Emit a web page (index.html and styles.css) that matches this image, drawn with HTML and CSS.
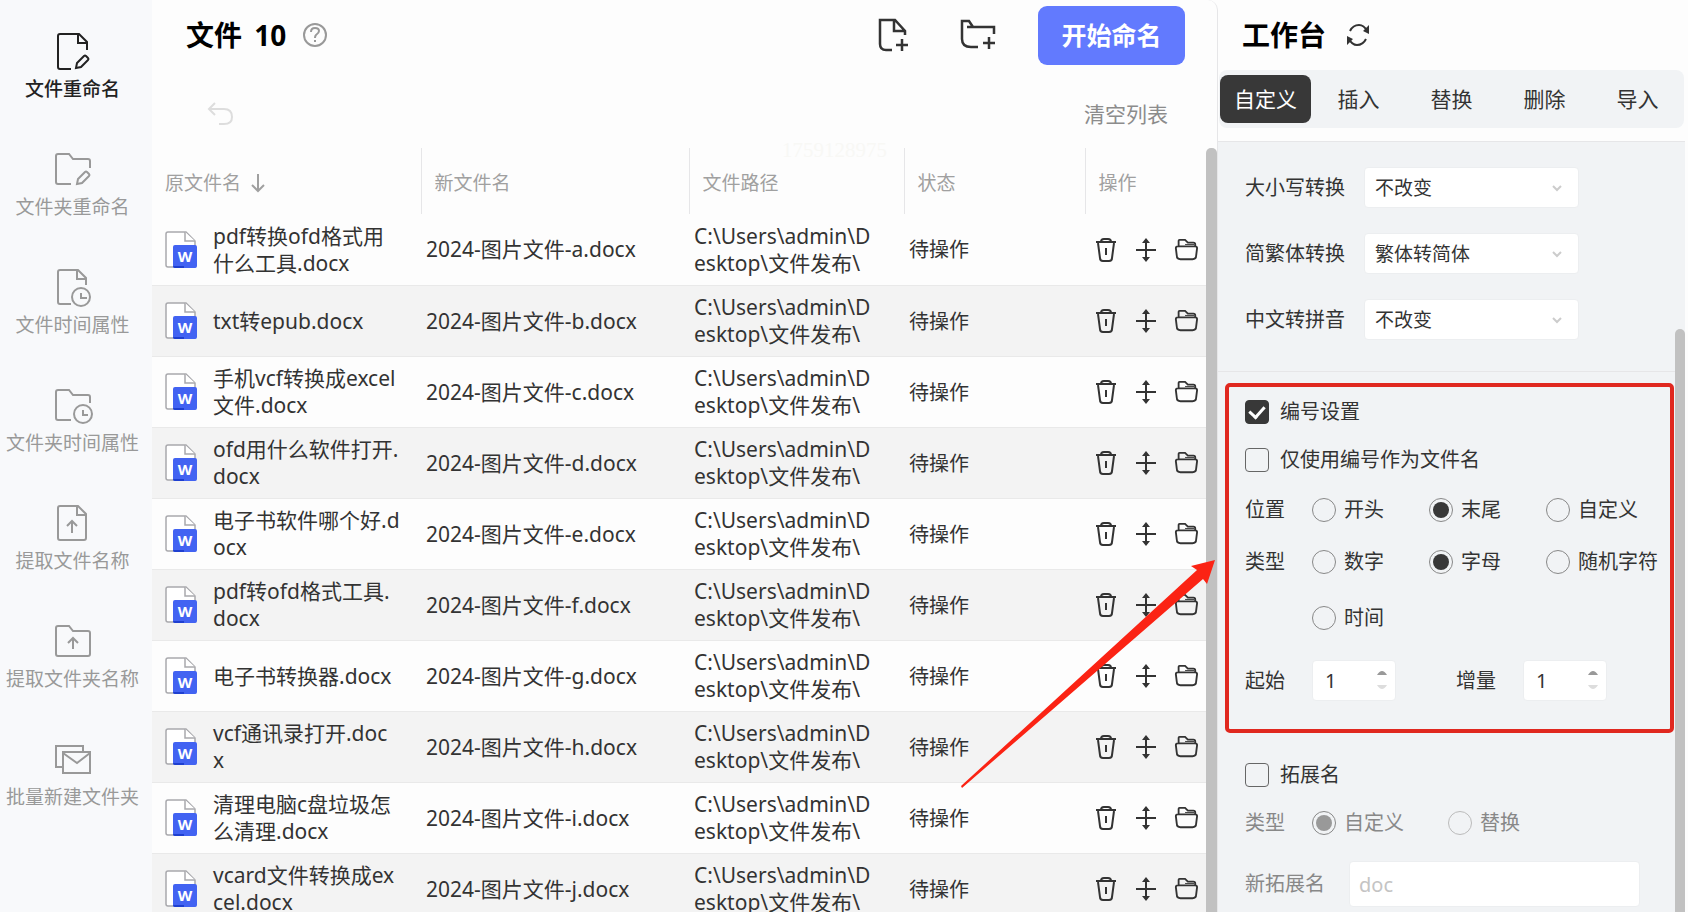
FILE: index.html
```
<!DOCTYPE html>
<html lang="zh-CN">

<head>
  <meta charset="UTF-8">
  <meta name="viewport" content="width=device-width, initial-scale=1.0">
  <title>文件重命名</title>
  <link rel="stylesheet" href="styles.css">
</head>

<body>

  <!-- Icons -->
  <svg class="sprite" xmlns="http://www.w3.org/2000/svg">
    <symbol id="i-file-edit" viewBox="0 0 40 40">
      <path d="M18 38H7q-2 0-2-2V5q0-2 2-2h19l8 8v8M25 3v9h9M23 37l1-5 7-7q1-1 2 0l2 2q1 1 0 2l-7 7z" />
    </symbol>
    <symbol id="i-folder-edit" viewBox="0 0 40 40">
      <path d="M18 35H5q-2 0-2-2V7q0-2 2-2h11l4 5h15q2 0 2 2v7M24 35l1-5 7-7q1-1 2 0l2 2q1 1 0 2l-7 7z" />
    </symbol>
    <symbol id="i-file-time" viewBox="0 0 40 40">
      <path d="M18 37H7q-2 0-2-2V5q0-2 2-2h18l8 8v7M24 3v9h9M28 26v5h6" />
      <circle cx="28" cy="30" r="9" />
    </symbol>
    <symbol id="i-folder-time" viewBox="0 0 40 40">
      <path d="M18 35H5q-2 0-2-2V7q0-2 2-2h11l4 5h15q2 0 2 2v6M30 25v5h5" />
      <circle cx="30" cy="29" r="9" />
    </symbol>
    <symbol id="i-file-up" viewBox="0 0 40 40">
      <path d="M7 3h18l8 8v24q0 2-2 2H7q-2 0-2-2V5q0-2 2-2zM24 3v9h9M19 30V19M14 23l5-5 5 5" />
    </symbol>
    <symbol id="i-folder-up" viewBox="0 0 40 40">
      <path d="M5 5h11l4 5h15q2 0 2 2v21q0 2-2 2H5q-2 0-2-2V7q0-2 2-2zM20 28V17M15 22l5-5 5 5" />
    </symbol>
    <symbol id="i-batch" viewBox="0 0 40 40">
      <path d="M9 28H3V7h27v6M10 13h27v21H10zM10 14l14 10 13-10" />
    </symbol>
    <symbol id="i-file-add" viewBox="0 0 36 36">
      <path d="M17 33h-6q-6 0-6-6V3h15l10 11v4M19 4v10h10M27 22v12M21 28h12" />
    </symbol>
    <symbol id="i-folder-add" viewBox="0 0 36 36">
      <path d="M18 30h-7q-9 0-9-8V4h7l4 6h21v7M7 10h6M29 20v12M23 26h12" />
    </symbol>
    <symbol id="i-help" viewBox="0 0 26 26">
      <circle cx="13" cy="13" r="11" />
      <path d="M9 10q0-4 4-4t4 3q0 2-3 4-1 1-1 3M13 18v2" />
    </symbol>
    <symbol id="i-undo" viewBox="0 0 28 28">
      <path d="M8 3L2 9l6 6M2 9h15q8 0 8 8 0 7-8 7h-5" />
    </symbol>
    <symbol id="i-down" viewBox="0 0 16 20">
      <path d="M8 1v17M2 12l6 6 6-6" />
    </symbol>
    <symbol id="i-refresh" viewBox="0 0 24 24">
      <path d="M4 8Q7 2 13 2q5 0 8 6M20 16q-3 6-9 6-5 0-8-6" />
      <path class="solid" d="M23 2v9l-6-3zM1 22v-9l6 3z" />
    </symbol>
    <symbol id="i-trash" viewBox="0 0 24 26">
      <path d="M2 5h20M7 5q0-3 3-3h4q3 0 3 3M4 6l2 15q0 3 3 3h6q3 0 3-3l2-15M12 11v7" />
    </symbol>
    <symbol id="i-move" viewBox="0 0 24 26">
      <path d="M2 13h20M12 3v20" />
      <path class="solid" d="M12 1l4 5H8zM12 25l4-5H8z" />
    </symbol>
    <symbol id="i-open" viewBox="0 0 26 26">
      <path d="M5 9V3q0-1 1-1h6l3 3h6q2 0 2 2v2M4 9h19q2 0 2 2l-1 8q0 4-4 4H7q-4 0-4-4l-1-8q0-2 2-2z" />
      <path stroke-width="1" d="M12 7h10" />
    </symbol>
    <symbol id="i-word" viewBox="0 0 32 38">
      <path fill="#fff" stroke="#a9a9ad" stroke-width="1.5" d="M3 1h18l9 9v26H3q-2 0-2-2V3q0-2 2-2z" />
      <path fill="#fff" stroke="#a9a9ad" stroke-width="1.5" d="M20 1v9h10" />
      <rect x="8" y="14" width="24" height="23" rx="2" fill="#4263f2" stroke="none" />
      <path fill="#1e3fd0" stroke="none" d="M8 35h11v2h-9q-2 0-2-2z" />
      <text class="word-letter" x="20" y="31" text-anchor="middle">W</text>
    </symbol>
    <symbol id="i-chevron" viewBox="0 0 10 10">
      <path d="M1 3l4 4 4-4" />
    </symbol>
  </svg>

  <div class="app">

    <!-- Sidebar -->
    <nav class="sidebar">
      <a href="#" class="nav-item active"><svg><use href="#i-file-edit" /></svg>文件重命名</a>
      <a href="#" class="nav-item"><svg><use href="#i-folder-edit" /></svg>文件夹重命名</a>
      <a href="#" class="nav-item"><svg><use href="#i-file-time" /></svg>文件时间属性</a>
      <a href="#" class="nav-item"><svg><use href="#i-folder-time" /></svg>文件夹时间属性</a>
      <a href="#" class="nav-item"><svg><use href="#i-file-up" /></svg>提取文件名称</a>
      <a href="#" class="nav-item"><svg><use href="#i-folder-up" /></svg>提取文件夹名称</a>
      <a href="#" class="nav-item"><svg><use href="#i-batch" /></svg>批量新建文件夹</a>
    </nav>

    <!-- File list -->
    <main class="main">
      <header class="main-header">
        <h1 class="title">文件 <span class="count">10</span></h1>
        <svg class="help"><use href="#i-help" /></svg>
        <div class="header-actions">
          <button class="icon-btn" aria-label="添加文件"><svg><use href="#i-file-add" /></svg></button>
          <button class="icon-btn" aria-label="添加文件夹"><svg><use href="#i-folder-add" /></svg></button>
          <button class="start-btn">开始命名</button>
        </div>
      </header>

      <div class="toolbar">
        <button class="undo" aria-label="撤销" disabled><svg><use href="#i-undo" /></svg></button>
        <button class="clear">清空列表</button>
      </div>

      <div class="list">
        <table class="files">
          <colgroup>
            <col class="c-old">
            <col class="c-new">
            <col class="c-path">
            <col class="c-state">
            <col class="c-ops">
          </colgroup>
          <thead>
            <tr>
              <th>原文件名 <svg class="sort"><use href="#i-down" /></svg></th>
              <th>新文件名</th>
              <th>文件路径</th>
              <th>状态</th>
              <th>操作</th>
            </tr>
          </thead>
          <tbody id="rows"></tbody>
        </table>
        <div class="scrollbar"></div>
      </div>

      <span class="watermark">1759128975</span>
      <svg class="arrow" viewBox="0 0 256 230">
        <path d="M255 1L231 7l6 4L1 227l1 2L243 20l4 5z" />
      </svg>
    </main>

    <!-- Workbench -->
    <aside class="panel">
      <header class="panel-header">
        <h2 class="title">工作台</h2>
        <button class="refresh" aria-label="刷新"><svg><use href="#i-refresh" /></svg></button>
      </header>

      <div class="tabs">
        <button class="tab active">自定义</button>
        <button class="tab">插入</button>
        <button class="tab">替换</button>
        <button class="tab">删除</button>
        <button class="tab">导入</button>
      </div>

      <div class="panel-body">
        <form class="form">
          <div class="convert">
            <div class="field">
              <label for="case">大小写转换</label>
              <div class="select"><select id="case"><option>不改变</option></select><svg><use href="#i-chevron" /></svg></div>
            </div>
            <div class="field">
              <label for="trad">简繁体转换</label>
              <div class="select"><select id="trad"><option>繁体转简体</option></select><svg><use href="#i-chevron" /></svg></div>
            </div>
            <div class="field">
              <label for="pinyin">中文转拼音</label>
              <div class="select"><select id="pinyin"><option>不改变</option></select><svg><use href="#i-chevron" /></svg></div>
            </div>
          </div>

          <div class="numbering">
            <label class="check"><input type="checkbox" checked>编号设置</label>
            <label class="check"><input type="checkbox">仅使用编号作为文件名</label>
            <div class="radios">
              <span>位置</span>
              <label class="radio"><input type="radio" name="pos">开头</label>
              <label class="radio"><input type="radio" name="pos" checked>末尾</label>
              <label class="radio"><input type="radio" name="pos">自定义</label>
            </div>
            <div class="radios">
              <span>类型</span>
              <label class="radio"><input type="radio" name="type">数字</label>
              <label class="radio"><input type="radio" name="type" checked>字母</label>
              <label class="radio"><input type="radio" name="type">随机字符</label>
              <label class="radio second-line"><input type="radio" name="type">时间</label>
            </div>
            <div class="numbers">
              <label for="start">起始</label>
              <div class="number">
                <input type="number" id="start" value="1">
                <svg viewBox="0 0 10 22"><path fill="#999" d="M0 6q5-8 10 0z" /><path fill="#ddd" d="M0 16q5 8 10 0z" /></svg>
              </div>
              <label for="step">增量</label>
              <div class="number">
                <input type="number" id="step" value="1">
                <svg viewBox="0 0 10 22"><path fill="#999" d="M0 6q5-8 10 0z" /><path fill="#ddd" d="M0 16q5 8 10 0z" /></svg>
              </div>
            </div>
          </div>

          <div class="extension">
            <label class="check"><input type="checkbox">拓展名</label>
            <div class="radios muted">
              <span>类型</span>
              <label class="radio"><input type="radio" name="ext" checked disabled>自定义</label>
              <label class="radio"><input type="radio" name="ext" disabled>替换</label>
            </div>
            <div class="ext-field muted">
              <label for="ext">新拓展名</label>
              <input type="text" id="ext" placeholder="doc" disabled>
            </div>
          </div>
        </form>
        <div class="scrollbar panel-scrollbar"></div>
      </div>
    </aside>

  </div>

  <script>
    const files = [
      ["pdf转换ofd格式用<br>什么工具.docx", "a"],
      ["txt转epub.docx", "b"],
      ["手机vcf转换成excel<br>文件.docx", "c"],
      ["ofd用什么软件打开.<br>docx", "d"],
      ["电子书软件哪个好.d<br>ocx", "e"],
      ["pdf转ofd格式工具.<br>docx", "f"],
      ["电子书转换器.docx", "g"],
      ["vcf通讯录打开.doc<br>x", "h"],
      ["清理电脑c盘垃圾怎<br>么清理.docx", "i"],
      ["vcard文件转换成ex<br>cel.docx", "j"]
    ];

    document.getElementById("rows").innerHTML = files.map(([name, suffix]) => `
      <tr>
        <td><div class="file"><svg><use href="#i-word" /></svg><span>${name}</span></div></td>
        <td>2024-图片文件-${suffix}.docx</td>
        <td>C:\\Users\\admin\\D<br>esktop\\文件发布\\</td>
        <td class="state">待操作</td>
        <td>
          <div class="ops">
            <button aria-label="删除"><svg><use href="#i-trash" /></svg></button>
            <button aria-label="移动"><svg><use href="#i-move" /></svg></button>
            <button aria-label="打开文件夹"><svg><use href="#i-open" /></svg></button>
          </div>
        </td>
      </tr>`).join("");
  </script>

</body>

</html>
```
FILE: styles.css
```
:root {
  --text: #333;
  --muted: #999;
  --dark: #383838;
  --accent: #627afe;
  --red: #e0281f;
  --grey-bg: #f1f3f5;
  --line: #e6e6e8;
}

* {
  box-sizing: border-box;
}

body {
  margin: 0;
  background-color: #fdfdfd;
  color: var(--text);
  font-family: "Noto Sans", "Noto Sans CJK SC", sans-serif;
  font-size: 20px;
  line-height: 28px;
}

button {
  padding: 0;
  border: 0;
  background: none;
  color: inherit;
  font: inherit;
  cursor: pointer;
}

svg {
  display: block;
  fill: none;
  stroke: currentColor;
  stroke-width: 2;
}

.sprite {
  display: none;
}

.solid {
  fill: currentColor;
  stroke: none;
}

.word-letter {
  fill: #fff;
  stroke: none;
  font-size: 15px;
  font-weight: 700;
}

.app {
  display: flex;
  height: 100vh;
  overflow: hidden;
}

.title {
  margin: 0;
  color: #000;
  font-size: 28px;
  font-weight: 700;
  line-height: 40px;
}

.count {
  margin-left: 5px;
}

/* Sidebar */
.sidebar {
  flex: none;
  width: 152px;
  padding-right: 7px;
  background-color: #f8f9fb;
}

.nav-item {
  display: flex;
  flex-direction: column;
  align-items: center;
  gap: 4px;
  height: 118px;
  padding-top: 31px;
  color: var(--muted);
  font-size: 19px;
  text-decoration: none;
  white-space: nowrap;
}

.nav-item svg {
  width: 40px;
  height: 40px;
}

.nav-item.active {
  color: #222;
  font-weight: 500;
}

/* Main */
.main {
  position: relative;
  flex: 1;
  display: flex;
  flex-direction: column;
  min-width: 0;
  border-right: 1px solid var(--line);
  border-top-right-radius: 10px;
}

.main-header {
  display: flex;
  align-items: center;
  height: 70px;
  padding: 0 32px 0 34px;
}

.help {
  width: 26px;
  height: 26px;
  margin-left: 16px;
  color: #999;
}

.header-actions {
  display: flex;
  align-items: center;
  margin-left: auto;
}

.icon-btn {
  margin-right: 49px;
}

.icon-btn + .icon-btn {
  margin-right: 42px;
}

.icon-btn svg {
  width: 36px;
  height: 36px;
  stroke-width: 2.5;
}

.start-btn {
  width: 147px;
  height: 59px;
  border-radius: 9px;
  background-color: var(--accent);
  color: #fff;
  font-size: 25px;
  font-weight: 700;
}

.toolbar {
  display: flex;
  align-items: center;
  justify-content: space-between;
  height: 78px;
  padding: 10px 49px 0 55px;
}

.undo svg {
  width: 28px;
  height: 28px;
  color: #ddd;
}

.clear {
  color: #8c8c8c;
  font-size: 21px;
}

.list {
  flex: 1;
  display: flex;
  align-items: flex-start;
  min-height: 0;
  overflow: hidden;
}

.files {
  flex: 1;
  width: 100%;
  table-layout: fixed;
  border-collapse: collapse;
}

.c-old {
  width: 269px;
}

.c-new {
  width: 268px;
}

.c-path {
  width: 215px;
}

.c-state {
  width: 181px;
}

.files th {
  height: 66px;
  padding: 3px 13px 0;
  border-left: 1px solid var(--line);
  color: #a0a0a0;
  font-size: 19px;
  font-weight: 400;
  text-align: left;
  white-space: nowrap;
}

.files th:first-child {
  border-left: 0;
}

.sort {
  display: inline-block;
  width: 16px;
  height: 20px;
  margin-left: 4px;
  vertical-align: -3px;
}

.files td {
  height: 71px;
  padding: 1px 0 0 5px;
  border-bottom: 1px solid #e9e9e9;
  font-size: 21px;
  line-height: 27px;
  white-space: nowrap;
}

.files td:first-child {
  padding-left: 13px;
}

.files td.state {
  font-size: 20px;
}

.files tbody tr:nth-child(even) {
  background-color: #f3f3f3;
}

.file {
  display: flex;
  align-items: center;
  gap: 16px;
}

.file svg {
  flex: none;
  width: 32px;
  height: 38px;
}

.ops {
  display: flex;
  gap: 16px;
  padding-left: 4px;
}

.ops svg {
  width: 24px;
  height: 26px;
}

.scrollbar {
  flex: none;
  align-self: stretch;
  width: 11px;
  border-radius: 5px 5px 0 0;
  background-color: #c1c1c1;
}

.watermark {
  position: absolute;
  top: 136px;
  left: 630px;
  color: #f8f8f5;
  font-family: "Liberation Serif", serif;
  font-size: 21px;
}

/* Red pointer to the numbering group */
.arrow {
  position: absolute;
  top: 559px;
  right: 1px;
  width: 256px;
  height: 230px;
  pointer-events: none;
}

.arrow path {
  fill: #fb2314;
  stroke: none;
}

/* Workbench */
.panel {
  flex: none;
  display: flex;
  flex-direction: column;
  width: 470px;
}

.panel-header {
  display: flex;
  align-items: center;
  gap: 20px;
  height: 70px;
  padding-left: 24px;
}

.refresh svg {
  width: 24px;
  height: 24px;
}

.tabs {
  display: grid;
  grid-template-columns: repeat(5, 1fr);
  margin: 0 4px 13px 1px;
  padding: 5px 0;
  border-radius: 8px;
  background-color: var(--grey-bg);
}

.tab {
  height: 48px;
  border-radius: 8px;
  font-size: 21px;
}

.tab.active {
  margin: 0 1px;
  background-color: var(--dark);
  color: #fff;
}

.panel-body {
  flex: 1;
  display: flex;
  min-height: 0;
  margin-right: 3px;
  border-top: 1px solid var(--line);
  background-color: var(--grey-bg);
  overflow: hidden;
}

.form {
  flex: 1;
  min-width: 0;
}

.panel-scrollbar {
  width: 10px;
  margin-top: 187px;
}

.convert {
  display: flex;
  flex-direction: column;
  gap: 25px;
  padding: 25px 27px 31px;
  border-bottom: 1px solid var(--line);
}

.field {
  display: grid;
  grid-template-columns: 119px 215px;
  align-items: center;
}

.select,
.number {
  position: relative;
}

select,
input[type="number"],
input[type="text"] {
  display: block;
  width: 100%;
  height: 41px;
  margin: 0;
  border: 1px solid #eceef0;
  border-radius: 4px;
  background-color: #fff;
  color: var(--text);
  font: inherit;
  appearance: none;
}

select {
  padding: 0 10px;
  font-size: 19px;
}

.select svg {
  position: absolute;
  top: 16px;
  right: 17px;
  width: 10px;
  height: 10px;
  color: #ccc;
  pointer-events: none;
}

.numbering {
  margin: 11px 1px 0 7px;
  padding: 11px 0 28px 16px;
  border: 4px solid var(--red);
  border-radius: 5px;
}

.check,
.radio {
  display: flex;
  align-items: center;
  white-space: nowrap;
}

.check {
  gap: 11px;
  margin-bottom: 20px;
}

.radio {
  gap: 8px;
}

input[type="checkbox"],
input[type="radio"] {
  flex: none;
  display: grid;
  place-content: center;
  width: 24px;
  height: 24px;
  margin: 0;
  border: 1px solid #666;
  border-radius: 4px;
  appearance: none;
}

input[type="checkbox"]:checked {
  border-color: var(--dark);
  background-color: var(--dark);
}

input[type="checkbox"]:checked::before {
  content: "";
  width: 7px;
  height: 12px;
  margin-bottom: 3px;
  border: solid #fff;
  border-width: 0 3px 3px 0;
  transform: rotate(42deg);
}

input[type="radio"] {
  border-color: #888;
  border-radius: 50%;
}

input[type="radio"]:checked::before {
  content: "";
  width: 16px;
  height: 16px;
  border-radius: 50%;
  background-color: var(--dark);
}

.radios {
  display: grid;
  grid-template-columns: 67px 117px 117px auto;
  row-gap: 28px;
  margin: 22px 0 24px;
}

.second-line {
  grid-column: 2;
}

.numbers {
  display: grid;
  grid-template-columns: 67px 84px 127px 84px;
  justify-content: start;
  align-items: center;
  margin-top: 28px;
}

.number + label {
  padding-right: 27px;
  text-align: right;
}

input[type="number"] {
  padding: 0 12px;
}

input[type="number"]::-webkit-inner-spin-button {
  appearance: none;
}

.number svg {
  position: absolute;
  top: 9px;
  right: 9px;
  width: 10px;
  height: 22px;
  stroke: none;
  pointer-events: none;
}

.extension {
  padding: 28px 35px 0 27px;
}

.extension .radios {
  grid-template-columns: 67px 136px auto;
  margin: 20px 0 24px;
}

.muted {
  color: #888;
}

.muted input[type="radio"] {
  border-color: #bbb;
}

.muted input[type="radio"]:checked {
  border-color: #888;
}

.muted input[type="radio"]:checked::before {
  background-color: #999;
}

.ext-field {
  display: grid;
  grid-template-columns: 104px 1fr;
  align-items: center;
}

input[type="text"] {
  height: 46px;
  padding: 0 9px;
}

input[type="text"]::placeholder {
  color: #c4c4c4;
}
```
